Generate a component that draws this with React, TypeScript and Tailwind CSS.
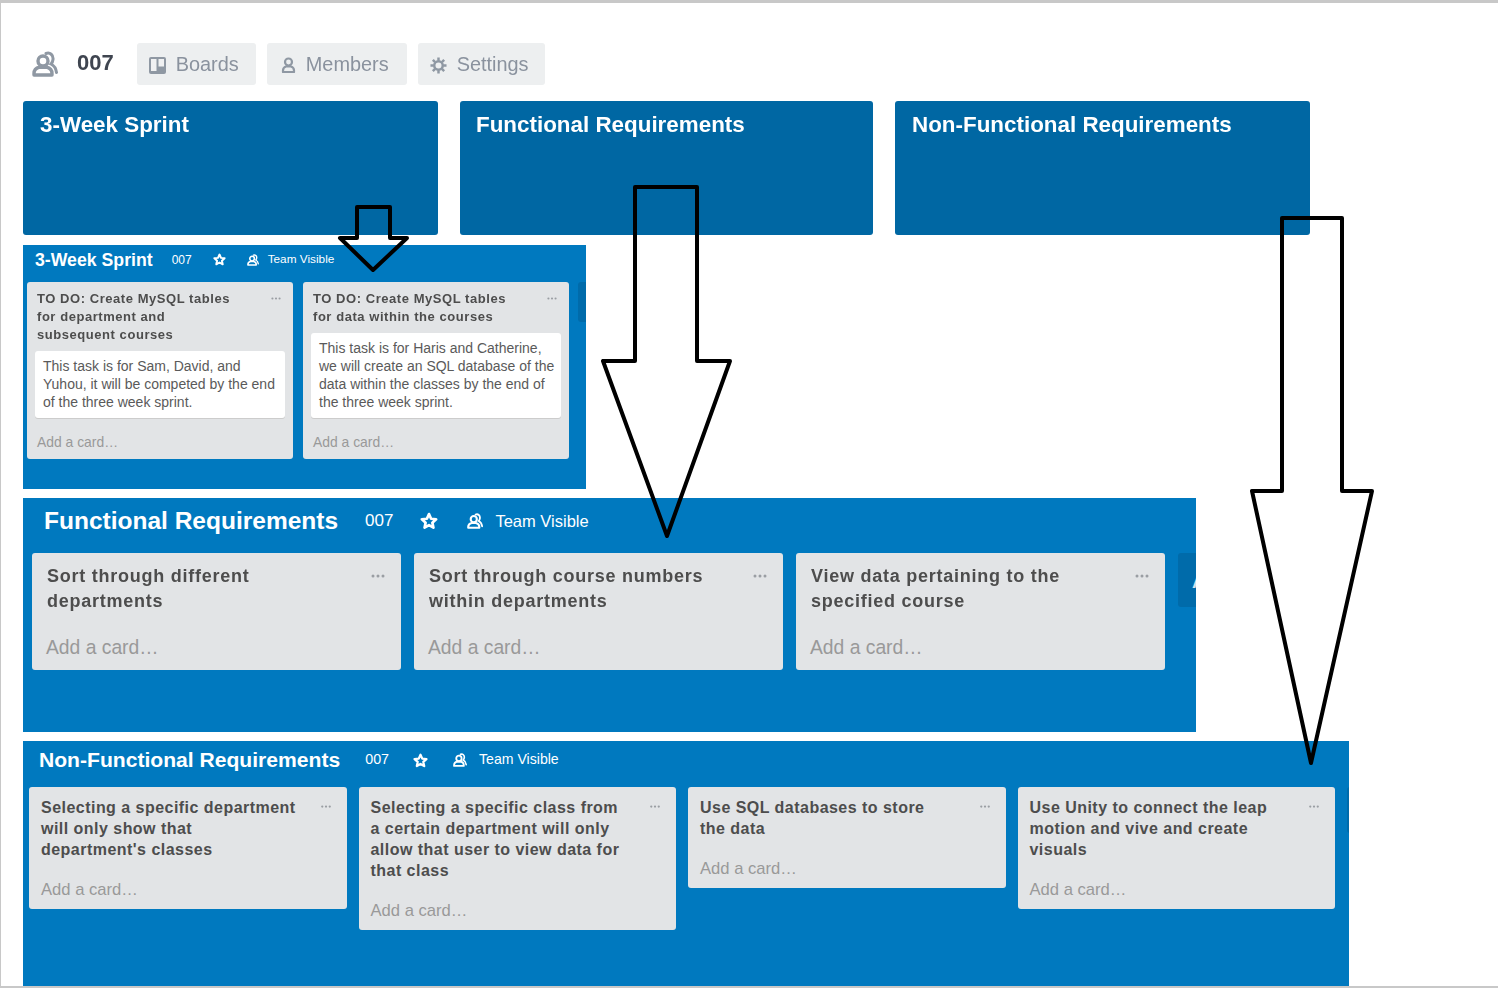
import React from "react";

function OrgIcon({ className }: { className: string }) {
  return (
    <svg viewBox="0 0 26 26" className={className} fill="none" stroke="currentColor">
      <circle cx="11" cy="10" r="5" strokeWidth="3.400" />
      <path d="M2 24v-1.500c0-3.600 3-5.700 5.500-6.300h7c2.500.6 5.500 2.700 5.500 6.300V24z" strokeWidth="3.400" strokeLinejoin="round" />
      <path d="M14 2.500c4-1.500 7.500 1.500 7 6-.2 2-1 3.500-2 4.500 3 1.500 5 4.500 5.500 8.500" strokeWidth="3" strokeLinecap="round" />
    </svg>
  );
}

function BoardIcon() {
  return (
    <svg viewBox="0 0 17 17" className="w-[17px] h-[17px] shrink-0">
      <rect width="17" height="17" rx="2" fill="#8f98a3" />
      <rect x="2" y="2" width="5.500" height="12" fill="#f0f1f2" />
      <rect x="9.500" y="2" width="5.500" height="7.500" fill="#f0f1f2" />
    </svg>
  );
}

function MemberIcon() {
  return (
    <svg viewBox="0 0 15 16" className="w-[15px] h-[16px] shrink-0" fill="none" stroke="#8f98a3" strokeWidth="2.200">
      <circle cx="7.500" cy="5" r="3.500" />
      <path d="M2 15v-1.500c0-2 1.500-3.500 3-4h5c1.500.5 3 2 3 4V15z" strokeLinejoin="round" />
    </svg>
  );
}

function GearIcon() {
  return (
    <svg viewBox="0 0 18 18" className="w-[17px] h-[17px] shrink-0" fill="none" stroke="#8f98a3">
      <circle cx="9" cy="9" r="4.500" strokeWidth="2.600" />
      <path d="M9 .5v3.500M9 14v3.500M.5 9H4M14 9h3.500M3 3l2.400 2.400M12.600 12.600L15 15M15 3l-2.400 2.400M5.400 12.600L3 15" strokeWidth="2.600" />
    </svg>
  );
}

function StarIcon({ className }: { className: string }) {
  return (
    <svg viewBox="0 0 24 24" className={className} fill="none" stroke="currentColor" strokeWidth="3.600" strokeLinejoin="round">
      <path d="M12 2.800l2.800 6.200 6.700.7-5 4.500 1.400 6.700L12 17.500l-5.900 3.400 1.400-6.700-5-4.500 6.700-.7z" />
    </svg>
  );
}

function Dots({ className }: { className: string }) {
  return (
    <svg viewBox="0 0 14 4" className={className} fill="#9a9ea3">
      <circle cx="2" cy="2" r="1.500" />
      <circle cx="7" cy="2" r="1.500" />
      <circle cx="12" cy="2" r="1.500" />
    </svg>
  );
}

type Sizes = {
  box: string;
  header: string;
  title: string;
  code: string;
  codeGap: string;
  star: string;
  starGap: string;
  org: string;
  team: string;
  teamGap: string;
  row: string;
  list: string;
  listHead: string;
  listTitle: string;
  dots: string;
  add: string;
  stub: string;
};

type ListData = { title: string[]; body?: string[] };

function List({ s, data }: { s: Sizes; data: ListData }) {
  return (
    <div className={`shrink-0 bg-[#e2e4e6] rounded-[3px] ${s.list}`}>
      <div className={`relative ${s.listHead}`}>
        {data.title.map((line) => (
          <div key={line} className={`font-bold text-[#4d4d4d] whitespace-nowrap ${s.listTitle}`}>
            {line}
          </div>
        ))}
        <Dots className={`absolute ${s.dots}`} />
      </div>
      {data.body && (
        <div className="mx-2 mt-[7px] bg-white rounded-[3px] pl-2 pt-[6px] pb-[7px] shadow-[0_1px_0_#ccc]">
          {data.body.map((line) => (
            <div key={line} className="text-[14px] leading-[18px] text-[#5a5a5a] whitespace-nowrap">
              {line}
            </div>
          ))}
        </div>
      )}
      <div className={`text-[#999] whitespace-nowrap ${s.add}`}>Add a card…</div>
    </div>
  );
}

function Board({ s, name, lists, stubText }: { s: Sizes; name: string; lists: ListData[]; stubText?: boolean }) {
  return (
    <div className={`bg-[#0079bf] overflow-hidden shrink-0 ${s.box}`}>
      <div className={`flex items-center text-white ${s.header}`}>
        <span className={`font-bold whitespace-nowrap ${s.title}`}>{name}</span>
        <span className={`${s.code} ${s.codeGap}`}>007</span>
        <span className={s.starGap}>
          <StarIcon className={`block ${s.star}`} />
        </span>
        <span className={s.teamGap}>
          <OrgIcon className={`block ${s.org}`} />
        </span>
        <span className={`whitespace-nowrap ${s.team}`}>Team Visible</span>
      </div>
      <div className={`flex items-start ${s.row}`}>
        {lists.map((l) => (
          <List key={l.title[0] + l.title[1]} s={s} data={l} />
        ))}
        <div className={`shrink-0 bg-[#006baa] rounded-[3px] text-[#cfe3ef] font-bold whitespace-nowrap ${s.stub}`}>
          {stubText ? "Add a list…" : ""}
        </div>
      </div>
    </div>
  );
}

const small: Sizes = {
  box: "w-[563px] h-[244px]",
  header: "h-[29px] pl-3",
  title: "text-[17.700px] leading-[22px]",
  code: "text-[12px]",
  codeGap: "ml-[19px]",
  star: "w-[13px] h-[13px]",
  starGap: "ml-[21px]",
  org: "w-[12px] h-[12px]",
  team: "ml-[9px] text-[11.800px]",
  teamGap: "ml-[21px]",
  row: "mt-2 pl-1 gap-[10px]",
  list: "w-[266px] pb-2",
  listHead: "pt-2 pl-[10px]",
  listTitle: "text-[13px] leading-[18px] tracking-[0.55px]",
  dots: "right-[12px] top-[15px] w-[10px] h-[3px]",
  add: "mt-[15px] pl-[10px] text-[13.900px] leading-[18px]",
  stub: "w-[40px] h-[40px] ml-[-1px]",
};

const medium: Sizes = {
  box: "w-[1173px] h-[234px]",
  header: "h-[46px] pl-[21px]",
  title: "text-[24.500px] leading-[30px]",
  code: "text-[17px]",
  codeGap: "ml-[27px]",
  star: "w-[18px] h-[18px]",
  starGap: "ml-[27px]",
  org: "w-[16px] h-[16px]",
  team: "ml-[12px] text-[16.500px]",
  teamGap: "ml-[29px]",
  row: "mt-[9px] pl-[9px] gap-[13px]",
  list: "w-[369px] pb-[10px]",
  listHead: "pt-[11px] pl-[15px]",
  listTitle: "text-[18px] leading-[25px] tracking-[0.75px]",
  dots: "right-[16px] top-[21px] w-[14px] h-[4px]",
  add: "mt-[21px] pl-[14px] text-[19.300px] leading-[25px]",
  stub: "w-[60px] h-[54px] pl-[14px] pt-[16px] text-[19px] leading-[25px]",
};

const large: Sizes = {
  box: "w-[1326px] h-[245px]",
  header: "h-[38px] pl-4",
  title: "text-[21.100px] leading-[26px]",
  code: "text-[14.300px]",
  codeGap: "ml-[25px]",
  star: "w-[15px] h-[15px]",
  starGap: "ml-[24px]",
  org: "w-[14px] h-[14px]",
  team: "ml-[12px] text-[14.100px]",
  teamGap: "ml-[25px]",
  row: "mt-2 pl-[6px] gap-[12px]",
  list: "w-[317.500px] pb-[9px]",
  listHead: "pt-[10px] pl-[12px]",
  listTitle: "text-[16px] leading-[21px] tracking-[0.47px]",
  dots: "right-[15px] top-[18px] w-[12px] h-[3px]",
  add: "mt-[19px] pl-[12px] text-[16.600px] leading-[21px]",
  stub: "w-[40px] h-[46px]",
};

const tiles = [
  { name: "3-Week Sprint", w: "w-[415px] pl-[17px]" },
  { name: "Functional Requirements", w: "w-[413px] pl-4" },
  { name: "Non-Functional Requirements", w: "w-[415px] pl-[17px]" },
];

export default function App() {
  return (
    <div className="relative h-[988px] overflow-hidden bg-white border-t-[3px] border-b-2 border-l border-[#c8c8c8] font-['Liberation_Sans',Arial,sans-serif]">
      <div className="flex items-center h-[42px] mt-[40px] ml-[31px] blur-[0.35px]">
        <OrgIcon className="w-[26px] h-[26px] text-[#8f98a3]" />
        <span className="ml-[19px] pb-[3px] text-[22px] font-bold text-[#3f4550]">007</span>
        <div className="ml-[23px] flex gap-[11px]">
          <div className="flex items-center h-[42px] pt-[2px] pl-3 pr-[17px] gap-[10px] bg-[#edeff0] rounded-[3px] text-[19.900px] text-[#8a929e]">
            <BoardIcon />
            Boards
          </div>
          <div className="flex items-center h-[42px] pt-[2px] pl-[14px] pr-[18px] gap-[10px] bg-[#edeff0] rounded-[3px] text-[19.900px] text-[#8a929e]">
            <MemberIcon />
            Members
          </div>
          <div className="flex items-center h-[42px] pt-[2px] pl-3 pr-4 gap-[10px] bg-[#edeff0] rounded-[3px] text-[19.900px] text-[#8a929e]">
            <GearIcon />
            Settings
          </div>
        </div>
      </div>

      <div className="ml-[22px] mt-4 flex gap-[22px] blur-[0.35px]">
        {tiles.map((t) => (
          <div key={t.name} className={`h-[134px] bg-[#0067a3] rounded-[3px] pt-[11px] text-white font-bold text-[22.400px] leading-[26px] ${t.w}`}>
            {t.name}
          </div>
        ))}
      </div>

      <div className="ml-[22px] mt-[10px] flex flex-col gap-[9px] blur-[0.35px]">
        <Board
          s={small}
          name="3-Week Sprint"
          lists={[
            {
              title: ["TO DO: Create MySQL tables", "for department and", "subsequent courses"],
              body: ["This task is for Sam, David, and", "Yuhou, it will be competed by the end", "of the three week sprint."],
            },
            {
              title: ["TO DO: Create MySQL tables", "for data within the courses"],
              body: [
                "This task is for Haris and Catherine,",
                "we will create an SQL database of the",
                "data within the classes by the end of",
                "the three week sprint.",
              ],
            },
          ]}
        />
        <Board
          s={medium}
          name="Functional Requirements"
          stubText
          lists={[
            { title: ["Sort through different", "departments"] },
            { title: ["Sort through course numbers", "within departments"] },
            { title: ["View data pertaining to the", "specified course"] },
          ]}
        />
        <Board
          s={large}
          name="Non-Functional Requirements"
          lists={[
            { title: ["Selecting a specific department", "will only show that", "department's classes"] },
            { title: ["Selecting a specific class from", "a certain department will only", "allow that user to view data for", "that class"] },
            { title: ["Use SQL databases to store", "the data"] },
            { title: ["Use Unity to connect the leap", "motion and vive and create", "visuals"] },
          ]}
        />
      </div>

      <svg className="absolute left-[-1px] top-[-3px] pointer-events-none" width="1498" height="988" fill="none" stroke="#000" strokeLinejoin="round">
        <path d="M357 207H390V238H407L373 270L340 238H357Z" strokeWidth="4" />
        <path d="M635 187H697V361H730L667 536L603 361H635Z" strokeWidth="4" />
        <path d="M1282 218H1342V491H1372L1311 763L1252 491H1282Z" strokeWidth="4" />
      </svg>
    </div>
  );
}
